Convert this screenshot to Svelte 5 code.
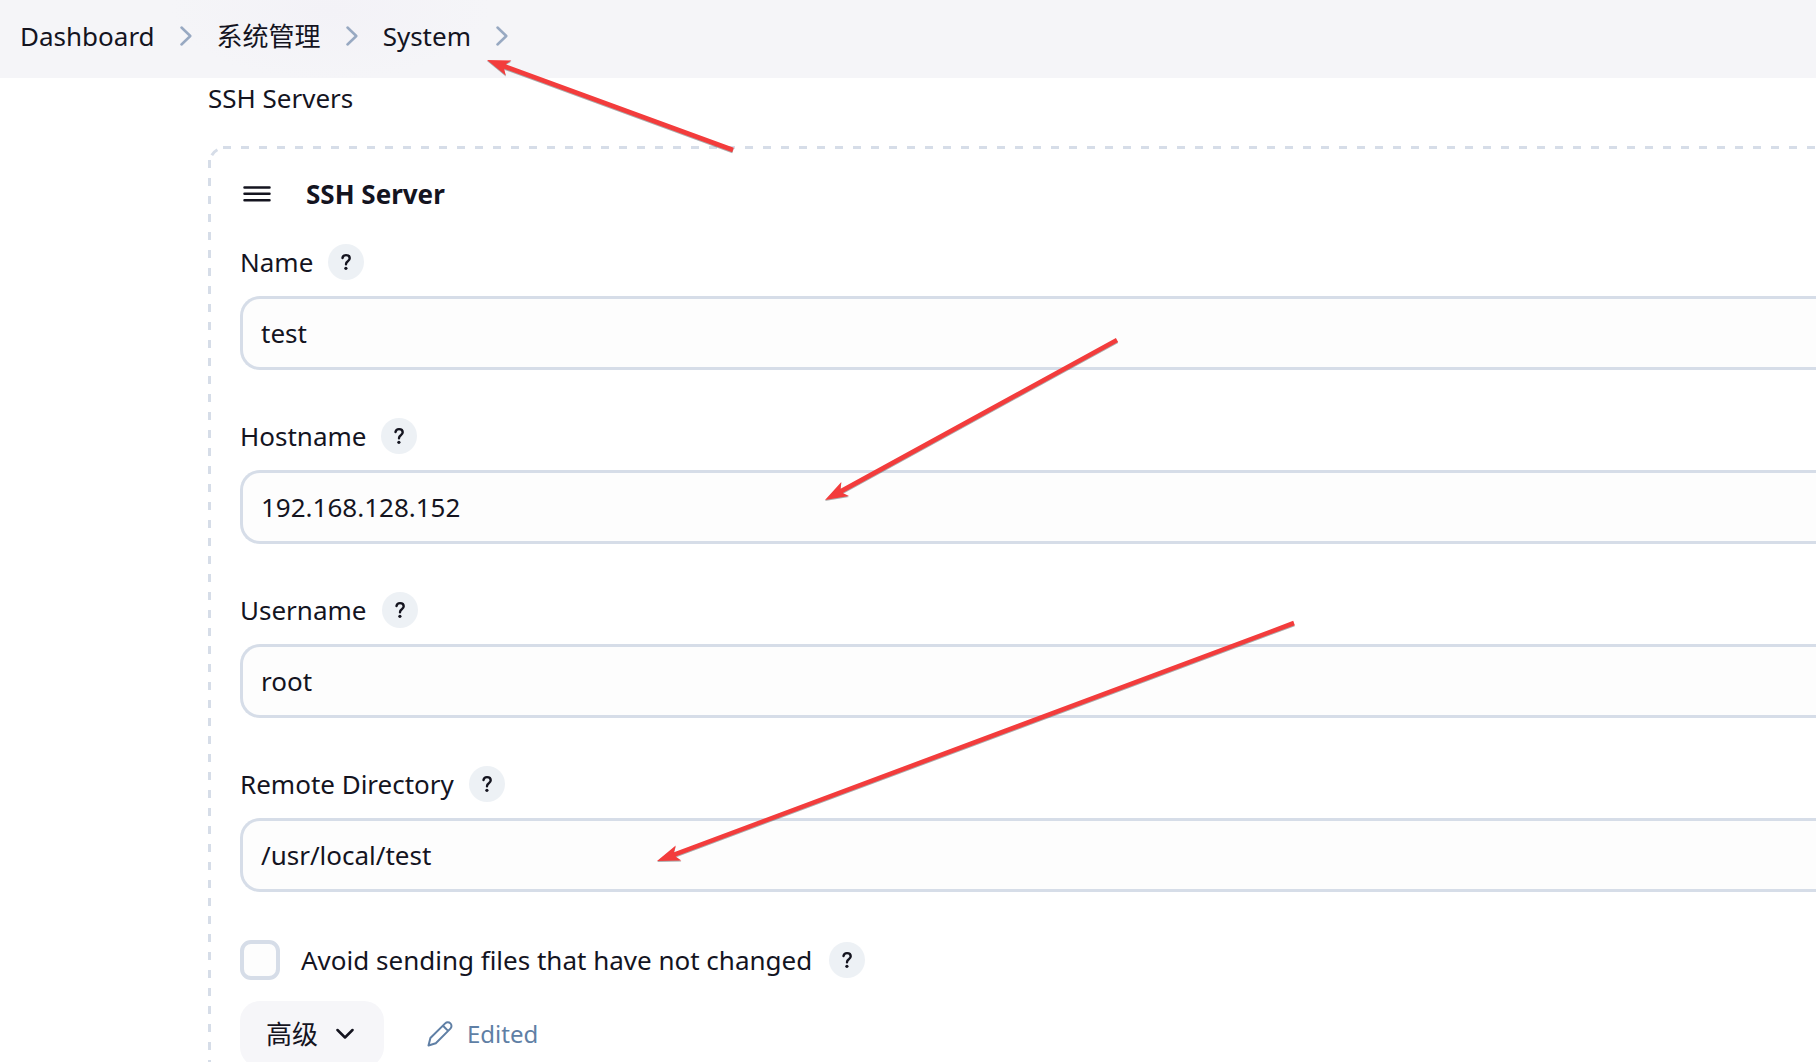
<script>
  const crumbs = ['Dashboard', '系统管理', 'System'];

  let fields = $state([
    { id: 'name', label: 'Name', value: 'test' },
    { id: 'hostname', label: 'Hostname', value: '192.168.128.152' },
    { id: 'username', label: 'Username', value: 'root' },
    { id: 'remote', label: 'Remote Directory', value: '/usr/local/test' },
  ]);

  let avoidUnchanged = $state(false);

  const arrows = [
    { tip: [487, 60], tail: [733, 150] },
    { tip: [825, 500], tail: [1117, 340] },
    { tip: [657, 861], tail: [1294, 623] },
  ].map(({ tip, tail }) => {
    const dx = tail[0] - tip[0];
    const dy = tail[1] - tip[1];
    return {
      length: Math.hypot(dx, dy),
      transform: `translate(${tip[0]} ${tip[1]}) rotate(${(Math.atan2(dy, dx) * 180) / Math.PI})`,
    };
  });
</script>

{#snippet help(label)}
  <button type="button" class="help" aria-label={`Help for ${label}`}>
    <svg viewBox="0 0 36 36" aria-hidden="true">
      <path d="M14.500 14c.3-1.800 1.700-2.900 3.500-2.900 2.100 0 3.700 1.300 3.700 3.200 0 1.400-.8 2.200-1.900 3-1.300.9-1.800 1.500-1.800 3" />
      <circle cx="17.900" cy="24.300" r="1.600" />
    </svg>
  </button>
{/snippet}

<div class="page">
  <nav class="crumbs" aria-label="Breadcrumb">
    {#each crumbs as crumb}
      <a href="#top">{crumb}</a>
      <svg class="sep" viewBox="0 0 12 20" aria-hidden="true"><path d="M1.500 1.500 10.300 10l-8.800 8.500" /></svg>
    {/each}
  </nav>

  <main>
    <div class="title">SSH Servers</div>

    <section class="panel" aria-labelledby="server-heading">
      <svg class="outline" aria-hidden="true">
        <line x1="15" y1="1.500" x2="100%" y2="1.500" />
        <line x1="1.500" y1="14" x2="1.500" y2="100%" />
        <path d="M3.800 9.200C5 7.200 6.800 5.200 9.400 3.800" />
      </svg>

      <header>
        <svg class="grip" viewBox="0 0 28 20" aria-hidden="true">
          <path d="M1.500 3.500h25M1.500 9.800h25M1.500 16.200h25" />
        </svg>
        <h2 id="server-heading">SSH Server</h2>
      </header>

      {#each fields as field (field.id)}
        <div class="field">
          <div class="caption">
            <label for={field.id}>{field.label}</label>
            {@render help(field.label)}
          </div>
          <input id={field.id} type="text" bind:value={field.value} spellcheck="false" />
        </div>
      {/each}

      <div class="check">
        <input id="avoid" type="checkbox" bind:checked={avoidUnchanged} />
        <label for="avoid">Avoid sending files that have not changed</label>
        {@render help('Avoid sending files that have not changed')}
      </div>

      <div class="actions">
        <button type="button" class="advanced">
          高级
          <svg viewBox="0 0 18 12" aria-hidden="true"><path d="M1.500 2 9 9.500 16.500 2" /></svg>
        </button>
        <span class="edited">
          <svg viewBox="0 0 26 26" aria-hidden="true">
            <path d="M1.500 24.500 3.400 17 18.200 2.400a3.600 3.600 0 0 1 5.200 5.200L8.800 22.300zM16 4.800l5.100 5.100" />
          </svg>
          Edited
        </span>
      </div>
    </section>
  </main>

  <svg class="arrows" aria-hidden="true">
    {#each arrows as arrow}
      <g transform={arrow.transform}>
        <path d={`M0 0 23-8 19-2.300H${arrow.length}V2.300H19L23 8z`} />
      </g>
    {/each}
  </svg>
</div>

<style>
  :global(body) {
    margin: 0;
    background: #fff;
  }

  .page {
    position: relative;
    height: 100vh;
    overflow: hidden;
    color: #14141f;
    font-family: 'Noto Sans', 'Noto Sans CJK SC', sans-serif;
    font-size: 26px;
    line-height: 36px;
  }

  svg {
    display: block;
    flex: none;
    fill: none;
    stroke-linecap: round;
    stroke-linejoin: round;
  }

  button,
  input {
    box-sizing: border-box;
    margin: 0;
    color: inherit;
    font: inherit;
  }

  button {
    border: 0;
    cursor: pointer;
  }

  .crumbs {
    display: flex;
    align-items: center;
    gap: 25px;
    height: 78px;
    padding: 0 20px 6px;
    box-sizing: border-box;
    background: radial-gradient(ellipse 160px 70px at 330px 10px, #f3f2f7, #f5f5f8);
  }

  .crumbs a {
    color: inherit;
    text-decoration: none;
  }

  .sep {
    width: 12px;
    height: 20px;
    stroke: #98a9c2;
    stroke-width: 2.500;
  }

  main {
    padding-left: 208px;
  }

  .title {
    line-height: 40px;
  }

  .panel {
    position: relative;
    margin-top: 28px;
    padding: 30px 0 40px 32px;
  }

  .outline {
    position: absolute;
    inset: 0;
    width: 100%;
    height: 100%;
    stroke: #d6dde8;
    stroke-width: 3;
    stroke-linecap: butt;
    stroke-dasharray: 8 10;
    pointer-events: none;
  }

  header {
    display: flex;
    align-items: center;
    gap: 35px;
    padding-left: 3px;
    margin-bottom: 32px;
  }

  .grip {
    width: 28px;
    height: 20px;
    stroke: #14141f;
    stroke-width: 2.500;
  }

  h2 {
    margin: 0;
    font-size: 26px;
    font-weight: 700;
    line-height: 36px;
  }

  .field {
    margin-bottom: 48px;
  }

  .caption {
    display: flex;
    align-items: center;
    gap: 15px;
    margin-bottom: 16px;
  }

  .help {
    flex: none;
    width: 36px;
    height: 36px;
    padding: 0;
    border-radius: 50%;
    background: #edf1f5;
  }

  .help svg {
    width: 36px;
    height: 36px;
    stroke: #14141f;
    stroke-width: 2.400;
  }

  .help circle {
    fill: #14141f;
    stroke: none;
  }

  .field input {
    display: block;
    width: 100%;
    height: 74px;
    padding: 0 18px;
    border: 3px solid #d6dde8;
    border-right: 0;
    border-radius: 20px 0 0 20px;
    background: #fdfdfd;
    outline: 0;
  }

  .check {
    display: flex;
    align-items: center;
    gap: 17px;
    margin-bottom: 21px;
  }

  .check input {
    appearance: none;
    width: 40px;
    height: 40px;
    margin-right: 4px;
    border: 4px solid #d6dde8;
    border-radius: 11px;
    background: #fdfdfd;
  }

  .check input:checked {
    background: #14141f;
  }

  .actions {
    display: flex;
    align-items: center;
    gap: 43px;
  }

  .advanced {
    display: flex;
    align-items: center;
    gap: 18px;
    height: 66px;
    padding: 0 30px 0 26px;
    border-radius: 20px;
    background: #f6f6f9;
  }

  .advanced svg {
    width: 18px;
    height: 12px;
    stroke: #14141f;
    stroke-width: 2.500;
  }

  .edited {
    display: flex;
    align-items: center;
    gap: 14px;
    color: #5f7fa5;
    font-size: 24px;
  }

  .edited svg {
    width: 26px;
    height: 26px;
    stroke: #5f7fa5;
    stroke-width: 2;
  }

  .arrows {
    position: absolute;
    inset: 0;
    width: 100%;
    height: 100%;
    fill: #f33c3c;
    filter: drop-shadow(0 1px 0 rgb(90 90 90 / 50%));
    pointer-events: none;
  }
</style>
